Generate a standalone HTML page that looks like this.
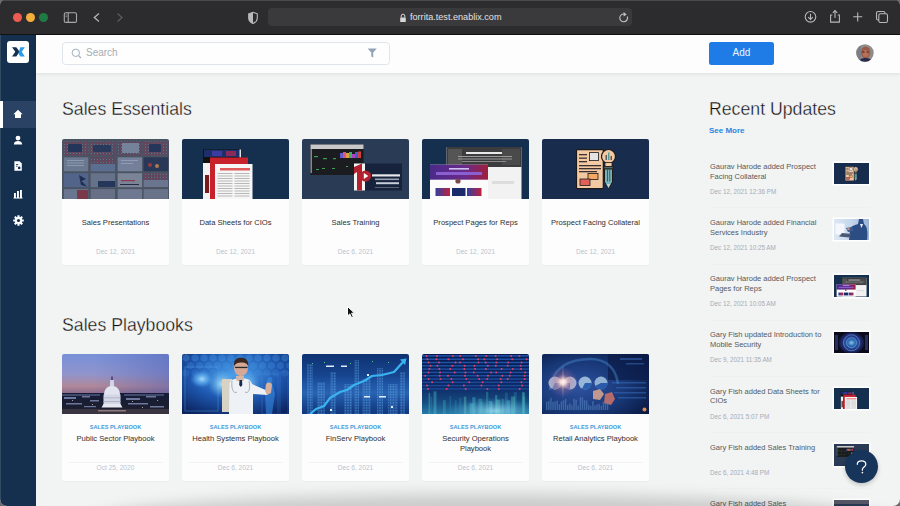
<!DOCTYPE html>
<html><head><meta charset="utf-8">
<style>
*{box-sizing:border-box;margin:0;padding:0}
html,body{width:900px;height:506px;overflow:hidden;background:#6a6a6c}
body{font-family:"Liberation Sans",sans-serif;position:relative}
.abs{position:absolute}
#win{position:absolute;left:0;top:0;width:900px;height:506px;border-radius:5px 5px 7px 7px;overflow:hidden;background:#f2f3f3}
#chrome{position:absolute;left:0;top:0;width:900px;height:35px;background:#2c2c2e;border-top:1px solid #4a4a4c;border-bottom:1px solid #111}
#side{position:absolute;left:0;top:35px;width:36px;height:471px;background:#15304f}
#hdr{position:absolute;left:36px;top:35px;width:864px;height:38px;background:#fdfdfd;box-shadow:0 1px 4px rgba(0,0,0,.09)}
.t{position:absolute;white-space:nowrap;line-height:1}
.card{position:absolute;width:107px;background:#fdfdfd;border-radius:2px;box-shadow:0 1px 1px rgba(0,0,0,.03);overflow:hidden}
.card .img{position:absolute;left:0;top:0;width:107px;height:60px;overflow:hidden}
.card .ti{position:absolute;left:0;width:107px;text-align:center;font-size:7.6px;color:#303030;line-height:10px;white-space:nowrap}
.card .dt{position:absolute;left:0;width:107px;text-align:center;font-size:6.6px;color:#b9c4cf;line-height:8px}
.card .lb{position:absolute;left:0;width:107px;text-align:center;font-size:5.6px;font-weight:bold;color:#3d9bd8;line-height:8px}
.card .dv{position:absolute;left:6px;width:95px;height:1px;background:#f1f3f5}
.h1{position:absolute;font-size:17.7px;color:#0a0a0a;line-height:1;white-space:nowrap;-webkit-text-stroke:.35px #f2f3f3}
.ru{position:absolute;left:710px;width:120px;font-size:7.5px;color:#555a60;line-height:9.8px}
.rd{position:absolute;left:710px;font-size:6.3px;color:#a3adb8;line-height:8px;white-space:nowrap}
.th{position:absolute;left:834px;width:35px;height:21.5px;overflow:hidden;background:#1b2f50;box-shadow:0 0 0 1.5px #fff}
.sep{position:absolute;left:710px;width:160px;height:1px;background:#eef0f1}
</style></head><body>
<div id="win">
 <div id="chrome">
  <div class="abs" style="left:12.5px;top:11.5px;width:9px;height:9px;border-radius:50%;background:#ee5b52"></div>
  <div class="abs" style="left:25.5px;top:11.5px;width:9px;height:9px;border-radius:50%;background:#f4ae3c"></div>
  <div class="abs" style="left:39px;top:11.5px;width:9px;height:9px;border-radius:50%;background:#1f7a45"></div>
  <svg class="abs" style="left:60px;top:7px" width="20" height="20" viewBox="0 0 20 20"><rect x="4.3" y="4.8" width="12.2" height="9.6" rx="1.5" fill="none" stroke="#a9a9ab" stroke-width="1.1"/><line x1="8.2" y1="4.8" x2="8.2" y2="14.4" stroke="#a9a9ab" stroke-width="1.1"/><line x1="5.6" y1="7" x2="6.9" y2="7" stroke="#a9a9ab" stroke-width=".8"/><line x1="5.6" y1="8.6" x2="6.9" y2="8.6" stroke="#a9a9ab" stroke-width=".8"/></svg>
  <svg class="abs" style="left:88px;top:7px" width="20" height="20" viewBox="0 0 20 20"><polyline points="11,5.5 6.3,9.5 11,13.5" fill="none" stroke="#b4b4b6" stroke-width="1.3"/></svg>
  <svg class="abs" style="left:111px;top:7px" width="20" height="20" viewBox="0 0 20 20"><polyline points="6.5,5.5 11,9.5 6.5,13.5" fill="none" stroke="#5c5c5e" stroke-width="1.2"/></svg>
  <svg class="abs" style="left:246px;top:9px" width="14" height="16" viewBox="0 0 14 16"><path d="M7 2.3 L11.3 3.8 L11.3 8 C11.3 10.8 9.3 12.6 7 13.6 C4.7 12.6 2.7 10.8 2.7 8 L2.7 3.8 Z" fill="none" stroke="#b9b9bb" stroke-width="1.1"/><path d="M7 2.3 L2.7 3.8 L2.7 8 C2.7 10.8 4.7 12.6 7 13.6 Z" fill="#b9b9bb"/></svg>
  <div class="abs" style="left:268px;top:7px;width:364px;height:18px;border-radius:4px;background:#3a393c"></div>
  <svg class="abs" style="left:399px;top:12px" width="8" height="10" viewBox="0 0 8 10"><path d="M2.2 4.5 V3 A1.8 1.8 0 0 1 5.8 3 V4.5" fill="none" stroke="#d8d8d8" stroke-width="1"/><rect x="1.2" y="4.5" width="5.6" height="4.6" rx=".6" fill="#d8d8d8"/></svg>
  <div class="t" style="left:410px;top:12px;font-size:9.1px;color:#e2e2e2">forrita.test.enablix.com</div>
  <svg class="abs" style="left:617px;top:9px" width="14" height="15" viewBox="0 0 14 15"><path d="M10.3 6.5 A3.9 3.9 0 1 1 7.9 4.2" fill="none" stroke="#c4c4c6" stroke-width="1.1"/><path d="M6.6 2 L9.6 4.4 L6.6 6.4 Z" fill="#c4c4c6"/></svg>
  <svg class="abs" style="left:803px;top:8.2px" width="16" height="16" viewBox="0 0 16 16"><circle cx="7.5" cy="7.8" r="5.3" fill="none" stroke="#b8b8ba" stroke-width="1.1"/><line x1="7.5" y1="4.8" x2="7.5" y2="10.3" stroke="#b8b8ba" stroke-width="1.1"/><polyline points="5.2,8.2 7.5,10.4 9.8,8.2" fill="none" stroke="#b8b8ba" stroke-width="1.1"/></svg>
  <svg class="abs" style="left:827px;top:7px" width="16" height="17" viewBox="0 0 16 17"><path d="M5.3 7 H3.6 V14.1 H12.4 V7 H10.7" fill="none" stroke="#b8b8ba" stroke-width="1.1"/><line x1="8" y1="2.6" x2="8" y2="10" stroke="#b8b8ba" stroke-width="1.1"/><polyline points="5.8,4.8 8,2.6 10.2,4.8" fill="none" stroke="#b8b8ba" stroke-width="1.1"/></svg>
  <svg class="abs" style="left:850px;top:8.2px" width="16" height="16" viewBox="0 0 16 16"><line x1="7.7" y1="3.4" x2="7.7" y2="12.4" stroke="#b8b8ba" stroke-width="1.1"/><line x1="3.2" y1="7.8" x2="12.2" y2="7.8" stroke="#b8b8ba" stroke-width="1.1"/></svg>
  <svg class="abs" style="left:873px;top:7px" width="18" height="17" viewBox="0 0 18 17"><rect x="3.5" y="3.5" width="8.5" height="8.5" rx="1.6" fill="none" stroke="#b8b8ba" stroke-width="1.1"/><rect x="5.8" y="5.8" width="8.7" height="8.7" rx="1.6" fill="#2c2c2e" stroke="#b8b8ba" stroke-width="1.1"/></svg>
 </div>
 <div id="side">
  <div class="abs" style="left:6.5px;top:5.5px;width:22.5px;height:22px;border-radius:3px;background:#fff"></div>
  <svg class="abs" style="left:6.5px;top:5.5px" width="23" height="22" viewBox="0 0 23 22"><path d="M5 6.3 H9.3 L12.6 10.8 L9.3 15.5 H5 L8.3 10.8 Z" fill="#15304f"/><path d="M13.3 6.3 H17.8 L14.8 10.8 L17.8 15.5 H13.3 L11.3 12.6 Z" fill="#2a9be8"/></svg>
  <div class="abs" style="left:0;top:65.5px;width:36px;height:27.5px;background:#2a4263"></div>
  <div class="abs" style="left:0;top:65.5px;width:2.8px;height:27.5px;background:#ffffff"></div>
  <svg class="abs" style="left:12px;top:73px" width="12" height="12" viewBox="0 0 12 12"><path d="M6 1.8 L10.6 6.2 H9 V10 H3 V6.2 H1.4 Z" fill="#fff"/></svg>
  <svg class="abs" style="left:12px;top:99px" width="12" height="12" viewBox="0 0 12 12"><circle cx="6" cy="4.1" r="2.4" fill="#fff"/><path d="M1.8 10.4 C2 7.8 3.8 7.1 6 7.1 C8.2 7.1 10 7.8 10.2 10.4 Z" fill="#fff"/></svg>
  <svg class="abs" style="left:12px;top:125px" width="12" height="12" viewBox="0 0 12 12"><path d="M2.4 1.3 H7.6 L9.8 3.5 V10.8 H2.4 Z" fill="#fff"/><path d="M4 4.5 H6.3 M4 6.2 H5.5" stroke="#15304f" stroke-width=".8"/><circle cx="7.2" cy="7.9" r="1.3" fill="#15304f"/></svg>
  <svg class="abs" style="left:12px;top:153px" width="12" height="12" viewBox="0 0 12 12"><rect x="2" y="5" width="1.9" height="5" fill="#fff"/><rect x="5" y="3" width="1.9" height="7" fill="#fff"/><rect x="8" y="2" width="1.9" height="8" fill="#fff"/><rect x="1.5" y="9.6" width="9" height=".9" fill="#fff"/></svg>
  <svg class="abs" style="left:11.5px;top:179px" width="13" height="13" viewBox="0 0 13 13"><g transform="translate(6.5 6.5)" fill="#fff"><circle r="3.6"/><rect x="-1.1" y="-5.3" width="2.2" height="10.6" rx=".4"/><rect x="-1.1" y="-5.3" width="2.2" height="10.6" rx=".4" transform="rotate(45)"/><rect x="-1.1" y="-5.3" width="2.2" height="10.6" rx=".4" transform="rotate(90)"/><rect x="-1.1" y="-5.3" width="2.2" height="10.6" rx=".4" transform="rotate(135)"/></g><circle cx="6.5" cy="6.5" r="1.6" fill="#15304f"/></svg>
 </div>
 <div id="hdr">
  <div class="abs" style="left:26px;top:7px;width:328px;height:23px;border:1px solid #dfe5eb;border-radius:3.5px;background:#fefefe"></div>
  <svg class="abs" style="left:34px;top:12px" width="14" height="14" viewBox="0 0 14 14"><circle cx="5.8" cy="5.8" r="3.7" fill="none" stroke="#9fb0c1" stroke-width="1"/><line x1="8.5" y1="8.5" x2="11" y2="11" stroke="#9fb0c1" stroke-width="1.1"/></svg>
  <div class="t" style="left:50px;top:13px;font-size:10px;color:#a5adb5">Search</div>
  <svg class="abs" style="left:330px;top:12px" width="12" height="12" viewBox="0 0 12 12"><path d="M1.7 1.6 H10.8 L7.2 5.6 V10.6 L5.3 9.4 V5.6 Z" fill="#90a3b6"/></svg>
  <div class="abs" style="left:673px;top:7px;width:65px;height:23px;border-radius:2.5px;background:#1f7ce6"></div>
  <div class="t" style="left:673px;top:13px;width:65px;text-align:center;font-size:10px;color:#eaf3fd">Add</div>
  <svg class="abs" style="left:819.5px;top:9px" width="18" height="18" viewBox="0 0 18 18"><defs><clipPath id="avc"><circle cx="9" cy="9" r="8.7"/></clipPath></defs><g clip-path="url(#avc)"><rect width="18" height="18" fill="#8f8c8a"/><rect x="0" y="0" width="5" height="18" fill="#7d7f86"/><ellipse cx="9.6" cy="8.6" rx="4.6" ry="6" fill="#9a5a48"/><ellipse cx="9.6" cy="9.5" rx="3" ry="3.5" fill="#b87058"/><rect x="6.5" y="7.5" width="2" height="1" fill="#3a1a1a"/><rect x="10.5" y="7.5" width="2" height="1" fill="#3a1a1a"/><path d="M3 18 C4 14.5 6.5 14 9.5 14 C12.5 14 15 14.5 16 18 Z" fill="#2a2a4a"/></g></svg>
 </div>
<!--MAIN-->
<div class="h1" style="left:62px;top:100.5px">Sales Essentials</div>
<div class="h1" style="left:62px;top:317px">Sales Playbooks</div>
<div class="h1" style="left:709px;top:101px">Recent Updates</div>
<div class="t" style="left:709px;top:127px;font-size:8px;font-weight:bold;color:#2b86df">See More</div>
<div class="card" style="left:62px;top:138.5px;height:126.5px"><div class="img"><svg width="107" height="60" viewBox="0 0 107 60" preserveAspectRatio="none" style="display:block"><defs><pattern id="rdp" width="3" height="3" patternUnits="userSpaceOnUse"><rect width="3" height="3" fill="#4e4a60"/><circle cx="1" cy="1" r=".7" fill="#9a3a50"/><circle cx="2.4" cy="2.3" r=".5" fill="#7a8aa8"/></pattern></defs><rect width="107" height="60" fill="#4a5362"/><rect x="1.8" y="2.4" width="24.5" height="14" fill="url(#rdp)"/><rect x="28.6" y="2.4" width="24.5" height="14" fill="url(#rdp)"/><rect x="55.6" y="2.4" width="24.5" height="14" fill="url(#rdp)"/><rect x="81.6" y="2.4" width="24.5" height="14" fill="url(#rdp)"/><rect x="1.8" y="18.3" width="24.5" height="14" fill="#6a7890"/><rect x="28.6" y="18.3" width="24.5" height="14" fill="url(#rdp)"/><rect x="55.6" y="18.3" width="24.5" height="14" fill="#74809a"/><rect x="81.6" y="18.3" width="24.5" height="14" fill="#2a3858"/><rect x="1.8" y="34.2" width="24.5" height="14" fill="#52648a"/><rect x="28.6" y="34.2" width="24.5" height="14" fill="#66728a"/><rect x="55.6" y="34.2" width="24.5" height="14" fill="#7a8496"/><rect x="81.6" y="34.2" width="24.5" height="14" fill="url(#rdp)"/><rect x="1.8" y="50.1" width="24.5" height="14" fill="#6a7690"/><rect x="28.6" y="50.1" width="24.5" height="14" fill="#687088"/><rect x="55.6" y="50.1" width="24.5" height="14" fill="#6e7890"/><rect x="81.6" y="50.1" width="24.5" height="14" fill="#687288"/>
<rect x="6" y="5" width="14" height="8" rx="1" fill="#24355a"/><rect x="31" y="6" width="18" height="7" rx="1" fill="#2a3a5c"/>
<rect x="60" y="4" width="17" height="10" fill="#74829a"/>
<rect x="87" y="5" width="12" height="8" rx="1" fill="#25365a"/>
<g fill="#a8b4c8" opacity=".55"><rect x="5" y="21" width="17" height="1"/><rect x="5" y="23.5" width="17" height="1"/><rect x="5" y="26" width="17" height="1"/><rect x="59" y="21" width="17" height="1"/><rect x="59" y="24" width="12" height="1"/></g>
<rect x="28.6" y="25" width="24.5" height="7.3" fill="#5a6e90"/>
<circle cx="88" cy="26" r="2" fill="#9a3a3a"/><circle cx="95" cy="27" r="2" fill="#b07a50"/>
<path d="M17 36 L24 40 L19.5 42 L25 47.5 L19 46 Z" fill="#1f2f52"/>
<rect x="36" y="42" width="17" height="6" fill="#24365a"/>
<rect x="59" y="41" width="14" height="1.2" fill="#8a3a4a"/><rect x="58" y="45" width="19" height="1" fill="#222a44"/>
<rect x="81.6" y="41" width="24.5" height="7" fill="#6a7590"/>
<rect x="15" y="51" width="11" height="10" fill="#7a3a4a"/>
</svg></div><div class="ti" style="top:79px">Sales Presentations</div><div class="dt" style="top:109.5px">Dec 12, 2021</div></div>
<div class="card" style="left:182px;top:138.5px;height:126.5px"><div class="img"><svg width="107" height="60" viewBox="0 0 107 60" preserveAspectRatio="none" style="display:block"><rect width="107" height="60" fill="#15304f"/>
<rect x="21" y="10.5" width="38" height="50" fill="#111"/>
<rect x="22" y="11" width="36" height="7" fill="#1d2f6a"/><rect x="30" y="12" width="10" height="5" fill="#3c3ca0"/><rect x="44" y="12" width="10" height="5" fill="#8a2a5a"/>
<rect x="57.5" y="10.5" width="1.5" height="8" fill="#ddd"/>
<rect x="21" y="24" width="7" height="36" fill="#f2f2f2"/><rect x="23" y="36" width="4" height="18" fill="#7a1a1a"/>
<rect x="28" y="18.5" width="38" height="42" fill="#c8212b"/>
<rect x="33" y="25" width="37.5" height="36" fill="#f6f6f6"/>
<rect x="38" y="29" width="30" height="2.5" fill="#e05a5a"/>
<g fill="#b8b8b8"><rect x="35.5" y="34" width="15" height="1"/><rect x="35.5" y="36.5" width="15" height="1"/><rect x="35.5" y="39" width="15" height="1"/><rect x="35.5" y="41.5" width="15" height="1"/><rect x="35.5" y="44" width="15" height="1"/><rect x="35.5" y="46.5" width="15" height="1"/><rect x="35.5" y="49" width="15" height="1"/><rect x="35.5" y="51.5" width="15" height="1"/><rect x="35.5" y="54" width="15" height="1"/><rect x="35.5" y="56.5" width="15" height="1"/>
<rect x="52.5" y="34" width="15" height="1"/><rect x="52.5" y="36.5" width="15" height="1"/><rect x="52.5" y="39" width="15" height="1"/><rect x="52.5" y="41.5" width="15" height="1"/><rect x="52.5" y="44" width="15" height="1"/><rect x="52.5" y="46.5" width="15" height="1"/><rect x="52.5" y="49" width="15" height="1"/><rect x="52.5" y="51.5" width="15" height="1"/><rect x="52.5" y="54" width="15" height="1"/><rect x="52.5" y="56.5" width="15" height="1"/></g>
</svg></div><div class="ti" style="top:79px">Data Sheets for CIOs</div><div class="dt" style="top:109.5px">Dec 12, 2021</div></div>
<div class="card" style="left:302px;top:138.5px;height:126.5px"><div class="img"><svg width="107" height="60" viewBox="0 0 107 60" preserveAspectRatio="none" style="display:block"><rect width="107" height="60" fill="#2a3b56"/>
<rect x="8.5" y="5.5" width="53" height="30.5" fill="#1b1c20"/>
<rect x="8.5" y="5.5" width="53" height="4.5" fill="#c8c8c8"/>
<rect x="8.5" y="10" width="1.5" height="24" fill="#888"/>
<g fill="#3aa050"><rect x="12" y="17" width="4" height="1.2"/><rect x="21" y="19" width="4" height="1.2"/><rect x="31" y="19" width="3" height="1.2"/><rect x="14" y="30" width="3" height="1"/><rect x="20" y="29" width="3" height="1"/><rect x="30" y="29" width="3" height="1"/><rect x="44" y="27" width="2" height="1"/></g>
<rect x="38" y="14" width="3" height="5" fill="#6a5ad0"/><rect x="41" y="13" width="3" height="6" fill="#d05a8a"/><rect x="44" y="14" width="3" height="5" fill="#e0a040"/><rect x="47" y="13" width="3" height="6" fill="#40b070"/><rect x="50" y="15" width="3" height="4" fill="#b040c0"/><rect x="53" y="13" width="3" height="6" fill="#4060d0"/><rect x="56" y="12.5" width="3" height="6.5" fill="#d04040"/>
<rect x="52" y="24.5" width="48" height="27" fill="#17233d"/>
<path d="M52 24.5 H63 V51.5 H52 Z" fill="#f4f4f4"/>
<path d="M52 28 L60 24.5 L60 51.5 L55 51.5 L55 33 L52 35 Z" fill="#b3202e"/>
<circle cx="63.5" cy="37" r="5.6" fill="#b3202e"/><path d="M61.8 34 L66.3 37 L61.8 40 Z" fill="#fff"/>
<rect x="70" y="35.3" width="28" height="2.2" fill="#e8e8e8"/>
<rect x="73" y="39.5" width="24" height="1.6" fill="#9aa0b0"/>
<rect x="74" y="43.2" width="23" height="2" fill="#c8ccd6"/>
<rect x="73" y="48" width="24" height=".8" fill="#6a7080"/>
</svg></div><div class="ti" style="top:79px">Sales Training</div><div class="dt" style="top:109.5px">Dec 6, 2021</div></div>
<div class="card" style="left:422px;top:138.5px;height:126.5px"><div class="img"><svg width="107" height="60" viewBox="0 0 107 60" preserveAspectRatio="none" style="display:block"><rect width="107" height="60" fill="#15304f"/>
<rect x="24.5" y="8" width="75" height="52" fill="#f2f2f2"/>
<rect x="24.5" y="8" width="75" height="20" fill="#3c3c3e"/>
<rect x="26" y="10" width="14" height="16" fill="#555"/><rect x="80" y="10" width="18" height="16" fill="#4a4a4a"/>
<rect x="44" y="13" width="36" height="2" fill="#e8e8e8"/>
<rect x="36" y="17" width="54" height="1" fill="#9a9a9a"/><rect x="36" y="19.5" width="54" height="1" fill="#9a9a9a"/><rect x="40" y="22" width="44" height="1" fill="#8a8a8a"/>
<rect x="70" y="42" width="22" height="3" fill="#ddd"/>
<rect x="8" y="25.7" width="58" height="35" fill="#fbfbfb"/>
<defs><linearGradient id="ppg" x1="0" x2="1"><stop offset="0" stop-color="#4a2a8a"/><stop offset=".6" stop-color="#6a2a8a"/><stop offset="1" stop-color="#a0203a"/></linearGradient>
<linearGradient id="ppt" x1="0" x2="1"><stop offset="0" stop-color="#3040a0"/><stop offset="1" stop-color="#c02040"/></linearGradient></defs>
<rect x="8" y="25.7" width="58" height="15" fill="url(#ppg)"/>
<rect x="27" y="29" width="20" height="1.6" fill="#d0c0f0"/>
<rect x="14" y="33" width="46" height="3" fill="#8a60d0"/>
<circle cx="36" cy="42" r="2.6" fill="#7a4a4a"/>
<rect x="13.5" y="49" width="14.5" height="8" fill="url(#ppt)"/><rect x="30" y="49" width="13.5" height="8" fill="#1a2a6a"/><rect x="45" y="49" width="14.5" height="8" fill="url(#ppt)"/>
</svg></div><div class="ti" style="top:79px">Prospect Pages for Reps</div><div class="dt" style="top:109.5px">Dec 12, 2021</div></div>
<div class="card" style="left:542px;top:138.5px;height:126.5px"><div class="img"><svg width="107" height="60" viewBox="0 0 107 60" preserveAspectRatio="none" style="display:block"><rect width="107" height="60" fill="#182d4e"/>
<rect x="34.5" y="10.6" width="26.8" height="39" rx="1" fill="#f2c9a3" stroke="#1a1a1a" stroke-width="1.2"/>
<g fill="#3a3030"><rect x="37" y="15" width="8" height="1.3"/><rect x="37" y="18.5" width="8" height="1.3"/><rect x="37" y="22" width="8" height="1.3"/><rect x="37" y="26" width="22" height="1.3"/><rect x="37" y="29" width="22" height="1.3"/><rect x="37" y="32" width="18" height="1.3"/></g>
<rect x="47.5" y="13.6" width="9" height="8" fill="#e4e4e4" stroke="#1a1a1a" stroke-width=".8"/>
<rect x="46" y="34.5" width="10" height="6" fill="#f4a860" stroke="#1a1a1a" stroke-width=".8"/>
<rect x="38" y="40" width="10" height="6.5" fill="#e0605a" stroke="#1a1a1a" stroke-width=".8"/>
<circle cx="66.5" cy="17.5" r="7" fill="#f2c9a3" stroke="#1a1a1a" stroke-width="1.2"/>
<rect x="63.5" y="16" width="1.5" height="5" fill="#5a5a5a"/><rect x="66" y="13.5" width="1.5" height="7.5" fill="#5a9a9a"/><rect x="68.5" y="17" width="1.5" height="4" fill="#5a5a5a"/>
<path d="M63 23.5 H70 V27.5 H63 Z" fill="#f2c9a3" stroke="#1a1a1a" stroke-width=".8"/>
<rect x="62" y="27.5" width="9" height="2.6" fill="#5a6a6a" stroke="#1a1a1a" stroke-width=".7"/>
<path d="M62.5 30 H70.5 V43 L66.5 49.5 L62.5 43 Z" fill="#7ab0b8" stroke="#1a1a1a" stroke-width="1"/>
<rect x="65" y="30.5" width=".8" height="12" fill="#2a4a50"/><rect x="67.4" y="30.5" width=".8" height="12" fill="#2a4a50"/>
<path d="M64.5 45 L66.5 49 L68.5 45 Z" fill="#ccc"/>
</svg></div><div class="ti" style="top:79px">Prospect Facing Collateral</div><div class="dt" style="top:109.5px">Dec 12, 2021</div></div>
<div class="card" style="left:62px;top:354px;height:127px"><div class="img"><svg width="107" height="60" viewBox="0 0 107 60" preserveAspectRatio="none" style="display:block"><defs><linearGradient id="sky" x1="0" y1="0" x2="0" y2="1"><stop offset="0" stop-color="#7890d8"/><stop offset=".5" stop-color="#9094cc"/><stop offset=".8" stop-color="#b0889a"/><stop offset="1" stop-color="#8a6a8a"/></linearGradient>
<linearGradient id="city" x1="0" y1="0" x2="0" y2="1"><stop offset="0" stop-color="#141c38"/><stop offset="1" stop-color="#20202c"/></linearGradient></defs>
<rect width="107" height="40" fill="url(#sky)"/>
<defs><linearGradient id="skr" x1="0" x2="1"><stop offset=".3" stop-color="#5064b0" stop-opacity="0"/><stop offset="1" stop-color="#4a5ab0" stop-opacity=".45"/></linearGradient></defs><rect x="0" y="0" width="107" height="40" fill="url(#skr)"/>
<rect y="39" width="107" height="21" fill="url(#city)"/>
<g fill="#8a96c0" opacity=".75"><rect x="2" y="43" width="12" height="2"/><rect x="20" y="42" width="8" height="1.5"/><rect x="64" y="44" width="14" height="2"/><rect x="84" y="42" width="10" height="1.5"/><rect x="4" y="49" width="16" height="1.5"/><rect x="66" y="49" width="20" height="1.5"/><rect x="88" y="52" width="14" height="1.5"/><rect x="28" y="46" width="9" height="1.5"/><rect x="62" y="40.5" width="40" height="1"/><rect x="0" y="40.5" width="38" height="1"/><rect x="22" y="52" width="12" height="1.2"/></g><g fill="#e8d8c0" opacity=".7"><rect x="10" y="46" width="1" height="1"/><rect x="30" y="50" width="1" height="1"/><rect x="70" y="47" width="1" height="1"/><rect x="95" y="46" width="1" height="1"/><rect x="80" y="53" width="1" height="1"/></g>
<rect x="49" y="22.5" width="2" height="4" fill="#5a4a80"/>
<path d="M47.8 33 L48.2 26 H51.8 L52.2 33 Z" fill="#d0d4e4"/>
<path d="M42 41 C42 35 45.5 32 50 32 C54.5 32 58 35 58 41 Z" fill="#e2e4f0"/>
<rect x="41.5" y="40.5" width="17" height="12" fill="#d4d8e6"/>
<path d="M39.5 53.5 L41.5 50 H58.5 L60.5 53.5 Z" fill="#e6e8f2"/>
<g fill="#a8acc4"><rect x="41.5" y="43.5" width="17" height=".8"/><rect x="41.5" y="47" width="17" height=".8"/></g>
<rect y="55" width="107" height="5" fill="#3a3440"/>
<g fill="#c8a8a0" opacity=".6"><rect x="36" y="56" width="28" height="1.5"/></g>
</svg></div><div class="lb" style="top:68.5px">SALES PLAYBOOK</div><div class="ti" style="top:80px">Public Sector Playbook</div><div class="dv" style="top:108px"></div><div class="dt" style="top:110px">Oct 25, 2020</div></div>
<div class="card" style="left:182px;top:354px;height:127px"><div class="img"><svg width="107" height="60" viewBox="0 0 107 60" preserveAspectRatio="none" style="display:block"><defs><radialGradient id="dg" cx=".5" cy=".35" r=".75"><stop offset="0" stop-color="#4aa0ec"/><stop offset=".55" stop-color="#1e58b0"/><stop offset="1" stop-color="#0c2460"/></radialGradient>
<radialGradient id="br" cx=".5" cy=".5" r=".5"><stop offset="0" stop-color="#a0dcff"/><stop offset=".6" stop-color="#50a0e8" stop-opacity=".7"/><stop offset="1" stop-color="#3a80d0" stop-opacity="0"/></radialGradient>
<radialGradient id="glw" cx=".5" cy=".5" r=".5"><stop offset="0" stop-color="#b8ecff" stop-opacity=".9"/><stop offset="1" stop-color="#60b8f0" stop-opacity="0"/></radialGradient></defs>
<rect width="107" height="60" fill="url(#dg)"/><polygon points="7.5,6.0 4.0,8.0 0.5,6.0 0.5,2.0 4.0,0.0 7.5,2.0" fill="#4a9ae8" opacity="0.35"/><polygon points="16.5,6.0 13.0,8.0 9.5,6.0 9.5,2.0 13.0,0.0 16.5,2.0" fill="#4a9ae8" opacity="0.35"/><polygon points="25.5,6.0 22.0,8.0 18.5,6.0 18.5,2.0 22.0,0.0 25.5,2.0" fill="#4a9ae8" opacity="0.35"/><polygon points="34.5,6.0 31.0,8.0 27.5,6.0 27.5,2.0 31.0,0.0 34.5,2.0" fill="#4a9ae8" opacity="0.35"/><polygon points="43.5,6.0 40.0,8.0 36.5,6.0 36.5,2.0 40.0,0.0 43.5,2.0" fill="#4a9ae8" opacity="0.35"/><polygon points="52.5,6.0 49.0,8.0 45.5,6.0 45.5,2.0 49.0,0.0 52.5,2.0" fill="#4a9ae8" opacity="0.35"/><polygon points="61.5,6.0 58.0,8.0 54.5,6.0 54.5,2.0 58.0,0.0 61.5,2.0" fill="#4a9ae8" opacity="0.35"/><polygon points="70.5,6.0 67.0,8.0 63.5,6.0 63.5,2.0 67.0,0.0 70.5,2.0" fill="#4a9ae8" opacity="0.35"/><polygon points="79.5,6.0 76.0,8.0 72.5,6.0 72.5,2.0 76.0,0.0 79.5,2.0" fill="#4a9ae8" opacity="0.35"/><polygon points="88.5,6.0 85.0,8.0 81.5,6.0 81.5,2.0 85.0,0.0 88.5,2.0" fill="#4a9ae8" opacity="0.35"/><polygon points="97.5,6.0 94.0,8.0 90.5,6.0 90.5,2.0 94.0,0.0 97.5,2.0" fill="#4a9ae8" opacity="0.35"/><polygon points="106.5,6.0 103.0,8.0 99.5,6.0 99.5,2.0 103.0,0.0 106.5,2.0" fill="#4a9ae8" opacity="0.35"/><polygon points="12.0,13.5 8.5,15.5 5.0,13.5 5.0,9.5 8.5,7.5 12.0,9.5" fill="#4a9ae8" opacity="0.27"/><polygon points="21.0,13.5 17.5,15.5 14.0,13.5 14.0,9.5 17.5,7.5 21.0,9.5" fill="#4a9ae8" opacity="0.27"/><polygon points="30.0,13.5 26.5,15.5 23.0,13.5 23.0,9.5 26.5,7.5 30.0,9.5" fill="#4a9ae8" opacity="0.27"/><polygon points="39.0,13.5 35.5,15.5 32.0,13.5 32.0,9.5 35.5,7.5 39.0,9.5" fill="#4a9ae8" opacity="0.27"/><polygon points="48.0,13.5 44.5,15.5 41.0,13.5 41.0,9.5 44.5,7.5 48.0,9.5" fill="#4a9ae8" opacity="0.27"/><polygon points="57.0,13.5 53.5,15.5 50.0,13.5 50.0,9.5 53.5,7.5 57.0,9.5" fill="#4a9ae8" opacity="0.27"/><polygon points="66.0,13.5 62.5,15.5 59.0,13.5 59.0,9.5 62.5,7.5 66.0,9.5" fill="#4a9ae8" opacity="0.27"/><polygon points="75.0,13.5 71.5,15.5 68.0,13.5 68.0,9.5 71.5,7.5 75.0,9.5" fill="#4a9ae8" opacity="0.27"/><polygon points="84.0,13.5 80.5,15.5 77.0,13.5 77.0,9.5 80.5,7.5 84.0,9.5" fill="#4a9ae8" opacity="0.27"/><polygon points="93.0,13.5 89.5,15.5 86.0,13.5 86.0,9.5 89.5,7.5 93.0,9.5" fill="#4a9ae8" opacity="0.27"/><polygon points="102.0,13.5 98.5,15.5 95.0,13.5 95.0,9.5 98.5,7.5 102.0,9.5" fill="#4a9ae8" opacity="0.27"/><polygon points="111.0,13.5 107.5,15.5 104.0,13.5 104.0,9.5 107.5,7.5 111.0,9.5" fill="#4a9ae8" opacity="0.27"/><polygon points="7.5,21.0 4.0,23.0 0.5,21.0 0.5,17.0 4.0,15.0 7.5,17.0" fill="#4a9ae8" opacity="0.19"/><polygon points="16.5,21.0 13.0,23.0 9.5,21.0 9.5,17.0 13.0,15.0 16.5,17.0" fill="#4a9ae8" opacity="0.19"/><polygon points="25.5,21.0 22.0,23.0 18.5,21.0 18.5,17.0 22.0,15.0 25.5,17.0" fill="#4a9ae8" opacity="0.19"/><polygon points="34.5,21.0 31.0,23.0 27.5,21.0 27.5,17.0 31.0,15.0 34.5,17.0" fill="#4a9ae8" opacity="0.19"/><polygon points="43.5,21.0 40.0,23.0 36.5,21.0 36.5,17.0 40.0,15.0 43.5,17.0" fill="#4a9ae8" opacity="0.19"/><polygon points="52.5,21.0 49.0,23.0 45.5,21.0 45.5,17.0 49.0,15.0 52.5,17.0" fill="#4a9ae8" opacity="0.19"/><polygon points="61.5,21.0 58.0,23.0 54.5,21.0 54.5,17.0 58.0,15.0 61.5,17.0" fill="#4a9ae8" opacity="0.19"/><polygon points="70.5,21.0 67.0,23.0 63.5,21.0 63.5,17.0 67.0,15.0 70.5,17.0" fill="#4a9ae8" opacity="0.19"/><polygon points="79.5,21.0 76.0,23.0 72.5,21.0 72.5,17.0 76.0,15.0 79.5,17.0" fill="#4a9ae8" opacity="0.19"/><polygon points="88.5,21.0 85.0,23.0 81.5,21.0 81.5,17.0 85.0,15.0 88.5,17.0" fill="#4a9ae8" opacity="0.19"/><polygon points="97.5,21.0 94.0,23.0 90.5,21.0 90.5,17.0 94.0,15.0 97.5,17.0" fill="#4a9ae8" opacity="0.19"/><polygon points="106.5,21.0 103.0,23.0 99.5,21.0 99.5,17.0 103.0,15.0 106.5,17.0" fill="#4a9ae8" opacity="0.19"/>
<rect x="3" y="13" width="33" height="44" fill="none" stroke="#5aa0e8" stroke-width=".7" opacity=".6"/>
<ellipse cx="20" cy="25" rx="12" ry="9" fill="url(#br)"/>
<ellipse cx="40" cy="30" rx="14" ry="14" fill="url(#glw)"/>
<ellipse cx="66" cy="30" rx="12" ry="14" fill="url(#glw)" opacity=".7"/>
<rect x="80" y="20" width="16" height="40" fill="none" stroke="#4a8ae0" stroke-width=".6" opacity=".6"/>
<rect x="98" y="18" width="8" height="42" fill="none" stroke="#4a8ae0" stroke-width=".6" opacity=".5"/>
<path d="M88 23 C90 23 91 26 90 29 L93 40 L90 60 H84 L83 40 L85 29 C84 26 86 23 88 23 Z" fill="#3a90e8" opacity=".55"/>
<path d="M40 25 H50 V58 H40 Z" fill="#d8d2c4"/>
<path d="M47 60 L47.5 30 C48 26 52 24.5 57 24.5 H63 C67 25 69 27 70 30 L86 37 L85 41 L71 40 L71 60 Z" fill="#eef2f6"/>
<path d="M84 30 C86 28 89 28 90 31 L89 39 L85 41 L83 37 Z" fill="#d8b0a0"/>
<path d="M54 22 H62 L61.5 27 H54.5 Z" fill="#d6b6a4"/>
<ellipse cx="59" cy="14" rx="7" ry="8.3" fill="#d4a894"/>
<path d="M52 12 C51.5 5.5 55 3.8 59 3.8 C63.5 3.8 66.5 6 66.3 12 C65 9 62 8.5 59 8.5 C56 8.5 53.5 9.5 52 12 Z" fill="#3a2820"/>
<rect x="53" y="12.8" width="12.5" height="1.3" fill="#2a2a2a"/>
<path d="M57.5 26 L60 26 L60.3 31 L58.8 33 L57.2 31 Z" fill="#1a2a4a"/>
<path d="M50 27 C49 36 52 40 55 38 M67 27 C69 36 66 40 63 38" fill="none" stroke="#8890a0" stroke-width=".7"/>
</svg></div><div class="lb" style="top:68.5px">SALES PLAYBOOK</div><div class="ti" style="top:80px">Health Systems Playbook</div><div class="dv" style="top:108px"></div><div class="dt" style="top:110px">Dec 6, 2021</div></div>
<div class="card" style="left:302px;top:354px;height:127px"><div class="img"><svg width="107" height="60" viewBox="0 0 107 60" preserveAspectRatio="none" style="display:block"><defs><linearGradient id="fg" x1="0" y1="0" x2="0" y2="1"><stop offset="0" stop-color="#0f3272"/><stop offset=".5" stop-color="#1a4c9a"/><stop offset="1" stop-color="#123a80"/></linearGradient></defs>
<rect width="107" height="60" fill="url(#fg)"/>
<defs><pattern id="fpx" width="1.6" height="1.6" patternUnits="userSpaceOnUse"><rect width="1" height="1" fill="#6ab0f0"/></pattern></defs><linearGradient id="fband" x1="0" y1="0" x2="0" y2="1"><stop offset="0" stop-color="#2a6ac0" stop-opacity="0"/><stop offset=".5" stop-color="#3a80d0" stop-opacity=".5"/><stop offset="1" stop-color="#2a6ac0" stop-opacity="0"/></linearGradient><rect x="0" y="22" width="107" height="34" fill="url(#fband)"/><g fill="url(#fpx)" opacity=".6"><rect x="5" y="10" width="6" height="50"/><rect x="15" y="28" width="8" height="32"/><rect x="28" y="18" width="6" height="42"/><rect x="42" y="30" width="8" height="30"/><rect x="52" y="6" width="5" height="54"/><rect x="60" y="25" width="9" height="35"/><rect x="75" y="14" width="6" height="46"/><rect x="86" y="30" width="10" height="30"/><rect x="98" y="18" width="5" height="42"/></g>
<g fill="#dfefff"><rect x="24" y="11.5" width="8" height="1.5"/><rect x="39" y="11.5" width="6" height="1.5"/><rect x="62" y="42" width="6" height="1.5"/><rect x="77" y="42" width="7" height="1.5"/><rect x="65" y="20" width="2" height="2"/><rect x="28" y="55" width="2" height="2"/><rect x="89" y="52" width="2" height="2"/></g>
<g fill="#4ad070"><rect x="10" y="9" width="1" height="1"/><rect x="22" y="8" width="1" height="1"/><rect x="48" y="9" width="1" height="1"/><rect x="70" y="7" width="1" height="1"/><rect x="86" y="8" width="1" height="1"/></g>
<polyline points="8,60 14,55 22,52 28,44 38,38 45,36 52,31 62,27 70,22 80,21 92,18 101,8" fill="none" stroke="#3ab4f0" stroke-width="2.2" stroke-linejoin="round"/>
<path d="M98 5.5 L104.5 4.5 L103 11 Z" fill="#3ab4f0"/>
</svg></div><div class="lb" style="top:68.5px">SALES PLAYBOOK</div><div class="ti" style="top:80px">FinServ Playbook</div><div class="dv" style="top:108px"></div><div class="dt" style="top:110px">Dec 6, 2021</div></div>
<div class="card" style="left:422px;top:354px;height:127px"><div class="img"><svg width="107" height="60" viewBox="0 0 107 60" preserveAspectRatio="none" style="display:block"><defs><linearGradient id="sg" x1="0" y1="0" x2="0" y2="1"><stop offset="0" stop-color="#081a50"/><stop offset=".55" stop-color="#0e2a66"/><stop offset=".8" stop-color="#164a80"/><stop offset="1" stop-color="#2a7aa8"/></linearGradient>
<radialGradient id="sgl" cx=".68" cy=".9" r=".45"><stop offset="0" stop-color="#b0f0ff" stop-opacity=".7"/><stop offset="1" stop-color="#40a0d0" stop-opacity="0"/></radialGradient></defs>
<rect width="107" height="60" fill="url(#sg)"/><rect x="0" y="1.2" width="107" height="1.4" fill="#2c74dc" opacity="0.70"/><circle cx="4.5" cy="1.9" r="1" fill="#e0406a"/><circle cx="15.0" cy="1.9" r="1" fill="#e0406a"/><circle cx="30.9" cy="1.9" r="1" fill="#e0406a"/><circle cx="38.2" cy="1.9" r="1" fill="#e0406a"/><circle cx="53.8" cy="1.9" r="1" fill="#e0406a"/><circle cx="64.3" cy="1.9" r="1" fill="#e0406a"/><circle cx="73.7" cy="1.9" r="1" fill="#e0406a"/><circle cx="89.2" cy="1.9" r="1" fill="#e0406a"/><circle cx="97.4" cy="1.9" r="1" fill="#e0406a"/><rect x="0" y="4.5" width="107" height="1.4" fill="#2c74dc" opacity="0.67"/><circle cx="5.4" cy="5.2" r="1" fill="#e0406a"/><circle cx="14.4" cy="5.2" r="1" fill="#e0406a"/><circle cx="26.4" cy="5.2" r="1" fill="#e0406a"/><circle cx="41.0" cy="5.2" r="1" fill="#e0406a"/><circle cx="56.1" cy="5.2" r="1" fill="#e0406a"/><circle cx="62.4" cy="5.2" r="1" fill="#e0406a"/><circle cx="75.1" cy="5.2" r="1" fill="#e0406a"/><circle cx="90.2" cy="5.2" r="1" fill="#e0406a"/><circle cx="104.6" cy="5.2" r="1" fill="#e0406a"/><rect x="0" y="7.8" width="107" height="1.4" fill="#2c74dc" opacity="0.64"/><circle cx="6.6" cy="8.5" r="1" fill="#e0406a"/><circle cx="17.0" cy="8.5" r="1" fill="#e0406a"/><circle cx="33.5" cy="8.5" r="1" fill="#e0406a"/><circle cx="38.0" cy="8.5" r="1" fill="#e0406a"/><circle cx="56.4" cy="8.5" r="1" fill="#e0406a"/><circle cx="63.7" cy="8.5" r="1" fill="#e0406a"/><circle cx="74.4" cy="8.5" r="1" fill="#e0406a"/><circle cx="86.1" cy="8.5" r="1" fill="#e0406a"/><circle cx="99.5" cy="8.5" r="1" fill="#e0406a"/><rect x="0" y="11.1" width="107" height="1.4" fill="#2c74dc" opacity="0.61"/><circle cx="8.5" cy="11.8" r="1" fill="#e0406a"/><circle cx="15.3" cy="11.8" r="1" fill="#e0406a"/><circle cx="30.4" cy="11.8" r="1" fill="#e0406a"/><circle cx="42.7" cy="11.8" r="1" fill="#e0406a"/><circle cx="52.5" cy="11.8" r="1" fill="#e0406a"/><circle cx="65.8" cy="11.8" r="1" fill="#e0406a"/><circle cx="73.8" cy="11.8" r="1" fill="#e0406a"/><circle cx="85.6" cy="11.8" r="1" fill="#e0406a"/><circle cx="98.7" cy="11.8" r="1" fill="#e0406a"/><rect x="0" y="14.4" width="107" height="1.4" fill="#2c74dc" opacity="0.58"/><circle cx="7.4" cy="15.1" r="1" fill="#e0406a"/><circle cx="17.3" cy="15.1" r="1" fill="#e0406a"/><circle cx="28.2" cy="15.1" r="1" fill="#e0406a"/><circle cx="42.3" cy="15.1" r="1" fill="#e0406a"/><circle cx="53.1" cy="15.1" r="1" fill="#e0406a"/><circle cx="63.8" cy="15.1" r="1" fill="#e0406a"/><circle cx="79.6" cy="15.1" r="1" fill="#e0406a"/><circle cx="90.8" cy="15.1" r="1" fill="#e0406a"/><circle cx="99.0" cy="15.1" r="1" fill="#e0406a"/><rect x="0" y="17.7" width="107" height="1.4" fill="#2c74dc" opacity="0.55"/><circle cx="6.5" cy="18.4" r="1" fill="#e0406a"/><circle cx="18.0" cy="18.4" r="1" fill="#e0406a"/><circle cx="32.7" cy="18.4" r="1" fill="#e0406a"/><circle cx="43.4" cy="18.4" r="1" fill="#e0406a"/><circle cx="51.8" cy="18.4" r="1" fill="#e0406a"/><circle cx="69.2" cy="18.4" r="1" fill="#e0406a"/><circle cx="74.2" cy="18.4" r="1" fill="#e0406a"/><circle cx="88.5" cy="18.4" r="1" fill="#e0406a"/><circle cx="103.1" cy="18.4" r="1" fill="#e0406a"/><rect x="0" y="21.0" width="107" height="1.4" fill="#2c74dc" opacity="0.52"/><circle cx="3.2" cy="21.7" r="1" fill="#e0406a"/><circle cx="17.7" cy="21.7" r="1" fill="#e0406a"/><circle cx="26.0" cy="21.7" r="1" fill="#e0406a"/><circle cx="43.0" cy="21.7" r="1" fill="#e0406a"/><circle cx="55.6" cy="21.7" r="1" fill="#e0406a"/><circle cx="66.0" cy="21.7" r="1" fill="#e0406a"/><circle cx="80.3" cy="21.7" r="1" fill="#e0406a"/><circle cx="87.7" cy="21.7" r="1" fill="#e0406a"/><circle cx="102.6" cy="21.7" r="1" fill="#e0406a"/><rect x="0" y="24.3" width="107" height="1.4" fill="#2c74dc" opacity="0.49"/><circle cx="6.7" cy="25.0" r="1" fill="#e0406a"/><circle cx="18.5" cy="25.0" r="1" fill="#e0406a"/><circle cx="29.4" cy="25.0" r="1" fill="#e0406a"/><circle cx="44.3" cy="25.0" r="1" fill="#e0406a"/><circle cx="57.1" cy="25.0" r="1" fill="#e0406a"/><circle cx="65.2" cy="25.0" r="1" fill="#e0406a"/><circle cx="78.6" cy="25.0" r="1" fill="#e0406a"/><circle cx="85.7" cy="25.0" r="1" fill="#e0406a"/><circle cx="102.7" cy="25.0" r="1" fill="#e0406a"/><rect x="0" y="27.6" width="107" height="1.4" fill="#2c74dc" opacity="0.46"/><circle cx="10.1" cy="28.3" r="1" fill="#e0406a"/><circle cx="30.7" cy="28.3" r="1" fill="#e0406a"/><circle cx="47.2" cy="28.3" r="1" fill="#e0406a"/><circle cx="60.7" cy="28.3" r="1" fill="#e0406a"/><circle cx="79.3" cy="28.3" r="1" fill="#e0406a"/><circle cx="99.4" cy="28.3" r="1" fill="#e0406a"/><rect x="0" y="30.9" width="107" height="1.4" fill="#2c74dc" opacity="0.43"/><circle cx="5.1" cy="31.6" r="1" fill="#e0406a"/><circle cx="26.4" cy="31.6" r="1" fill="#e0406a"/><circle cx="41.9" cy="31.6" r="1" fill="#e0406a"/><circle cx="59.4" cy="31.6" r="1" fill="#e0406a"/><circle cx="76.7" cy="31.6" r="1" fill="#e0406a"/><circle cx="100.2" cy="31.6" r="1" fill="#e0406a"/><rect x="0" y="34.2" width="107" height="1.4" fill="#2c74dc" opacity="0.40"/><circle cx="6.0" cy="34.9" r="1" fill="#e0406a"/><circle cx="24.7" cy="34.9" r="1" fill="#e0406a"/><circle cx="43.7" cy="34.9" r="1" fill="#e0406a"/><circle cx="65.4" cy="34.9" r="1" fill="#e0406a"/><circle cx="76.9" cy="34.9" r="1" fill="#e0406a"/><circle cx="97.7" cy="34.9" r="1" fill="#e0406a"/><rect x="57.7" y="47.5" width="3.7" height="12.5" fill="#2a8ab0" opacity=".38"/><rect x="74.2" y="45.6" width="4.0" height="14.4" fill="#60d0c0" opacity=".38"/><rect x="100.6" y="38.5" width="1.9" height="21.5" fill="#50c8d0" opacity=".38"/><rect x="69.1" y="47.6" width="1.5" height="12.4" fill="#50c8d0" opacity=".38"/><rect x="27.6" y="41.9" width="1.5" height="18.1" fill="#2a8ab0" opacity=".38"/><rect x="64.0" y="37.8" width="2.3" height="22.2" fill="#3ab0b0" opacity=".38"/><rect x="47.9" y="49.3" width="3.7" height="10.7" fill="#60d0c0" opacity=".38"/><rect x="41.8" y="42.7" width="2.5" height="17.3" fill="#60d0c0" opacity=".38"/><rect x="6.5" y="38.9" width="1.7" height="21.1" fill="#50c8d0" opacity=".38"/><rect x="11.5" y="37.4" width="3.0" height="22.6" fill="#50c8d0" opacity=".38"/><rect x="56.3" y="44.6" width="3.9" height="15.4" fill="#3ab0b0" opacity=".38"/><rect x="91.8" y="38.1" width="3.0" height="21.9" fill="#2a8ab0" opacity=".38"/><rect x="100.3" y="42.6" width="3.0" height="17.4" fill="#3ab0b0" opacity=".38"/><rect x="89.1" y="42.5" width="4.0" height="17.5" fill="#60d0c0" opacity=".38"/><rect x="32.7" y="46.5" width="1.9" height="13.5" fill="#2a8ab0" opacity=".38"/><rect x="50.3" y="43.2" width="3.2" height="16.8" fill="#50c8d0" opacity=".38"/><rect x="99.9" y="38.1" width="2.8" height="21.9" fill="#3ab0b0" opacity=".38"/><rect x="79.6" y="45.0" width="2.2" height="15.0" fill="#3ab0b0" opacity=".38"/><rect x="73.1" y="41.1" width="2.2" height="18.9" fill="#50c8d0" opacity=".38"/><rect x="37.3" y="43.6" width="2.1" height="16.4" fill="#2a8ab0" opacity=".38"/><rect x="66.8" y="47.0" width="3.0" height="13.0" fill="#50c8d0" opacity=".38"/><rect x="84.6" y="46.4" width="3.5" height="13.6" fill="#50c8d0" opacity=".38"/><rect x="21.0" y="46.2" width="2.7" height="13.8" fill="#3ab0b0" opacity=".38"/><rect x="83.0" y="38.7" width="2.7" height="21.3" fill="#2a8ab0" opacity=".38"/><rect x="47.0" y="49.8" width="3.8" height="10.2" fill="#2a8ab0" opacity=".38"/><rect x="8.5" y="42.6" width="1.8" height="17.4" fill="#2a8ab0" opacity=".38"/>
<rect x="0" y="30" width="107" height="30" fill="url(#sgl)"/>
</svg></div><div class="lb" style="top:68.5px">SALES PLAYBOOK</div><div class="ti" style="top:80px">Security Operations<br>Playbook</div><div class="dv" style="top:108px"></div><div class="dt" style="top:110px">Dec 6, 2021</div></div>
<div class="card" style="left:542px;top:354px;height:127px"><div class="img"><svg width="107" height="60" viewBox="0 0 107 60" preserveAspectRatio="none" style="display:block"><defs><radialGradient id="rg" cx=".35" cy=".55" r=".75"><stop offset="0" stop-color="#2e52a0"/><stop offset=".6" stop-color="#173674"/><stop offset="1" stop-color="#0a1a44"/></radialGradient>
<radialGradient id="flare" cx=".5" cy=".5" r=".5"><stop offset="0" stop-color="#ffffff"/><stop offset=".18" stop-color="#ffe0d8" stop-opacity=".9"/><stop offset=".5" stop-color="#c07898" stop-opacity=".35"/><stop offset="1" stop-color="#a060a0" stop-opacity="0"/></radialGradient></defs>
<rect width="107" height="60" fill="url(#rg)"/>
<rect x="66" y="0" width="41" height="26" fill="#0c1c48" opacity=".7"/>
<g fill="#3a70c0" opacity=".5"><rect x="78" y="4" width="22" height="2"/><rect x="84" y="9" width="18" height="1.5"/><rect x="70" y="28" width="34" height="1.5"/><rect x="74" y="33" width="30" height="1.5"/><rect x="72" y="38" width="32" height="1.5"/><rect x="76" y="43" width="28" height="1.5"/></g>
<path d="M8 36 C10 12 30 5 48 5 C66 5 74 16 76 30" fill="none" stroke="#4a8ad0" stroke-width="2.5" opacity=".45"/>
<circle cx="13" cy="29" r="6.5" fill="#a8b4cc"/><path d="M13 29 L19.5 29 A6.5 6.5 0 0 1 10 34.8 Z" fill="#6a80b0"/>
<circle cx="28" cy="29" r="6.5" fill="#a8b8d4"/><path d="M28 29 L28 35.5 A6.5 6.5 0 0 1 21.5 29 Z" fill="#5a78b0"/>
<circle cx="43" cy="29" r="6.5" fill="#98b6d8"/><path d="M43 29 L49.5 29 A6.5 6.5 0 0 1 40 34.8 Z" fill="#2a60b0"/>
<circle cx="59" cy="29" r="6.5" fill="#90b0d4"/><path d="M59 29 L65.5 29 A6.5 6.5 0 0 1 53 32 Z" fill="#2a5aa8"/>
<path d="M51 37 L58 35 L62 40 L58 46 L51 45 Z" fill="#c09890"/>
<path d="M63 40 L70 38 L73 45 L69 51 L62 49 Z" fill="#b86a6a"/><rect x="4.0" y="47.9" width="1.4" height="8.1" fill="#5a8ac8" opacity=".55"/><rect x="6.1" y="47.0" width="1.4" height="9.0" fill="#5a8ac8" opacity=".55"/><rect x="8.2" y="43.7" width="1.4" height="12.3" fill="#5a8ac8" opacity=".55"/><rect x="10.3" y="47.8" width="1.4" height="8.2" fill="#5a8ac8" opacity=".55"/><rect x="12.4" y="47.4" width="1.4" height="8.6" fill="#5a8ac8" opacity=".55"/><rect x="14.5" y="46.7" width="1.4" height="9.3" fill="#5a8ac8" opacity=".55"/><rect x="16.6" y="50.3" width="1.4" height="5.7" fill="#5a8ac8" opacity=".55"/><rect x="18.7" y="47.4" width="1.4" height="8.6" fill="#5a8ac8" opacity=".55"/><rect x="20.8" y="46.3" width="1.4" height="9.7" fill="#5a8ac8" opacity=".55"/><rect x="22.9" y="44.9" width="1.4" height="11.1" fill="#5a8ac8" opacity=".55"/><rect x="25.0" y="51.2" width="1.4" height="4.8" fill="#5a8ac8" opacity=".55"/><rect x="27.1" y="49.3" width="1.4" height="6.7" fill="#5a8ac8" opacity=".55"/><rect x="29.2" y="51.2" width="1.4" height="4.8" fill="#5a8ac8" opacity=".55"/><rect x="31.3" y="44.7" width="1.4" height="11.3" fill="#5a8ac8" opacity=".55"/><rect x="33.4" y="45.8" width="1.4" height="10.2" fill="#5a8ac8" opacity=".55"/><rect x="35.5" y="51.6" width="1.4" height="4.4" fill="#5a8ac8" opacity=".55"/><rect x="37.6" y="43.2" width="1.4" height="12.8" fill="#5a8ac8" opacity=".55"/><rect x="39.7" y="43.3" width="1.4" height="12.7" fill="#5a8ac8" opacity=".55"/><rect x="41.8" y="46.1" width="1.4" height="9.9" fill="#5a8ac8" opacity=".55"/><rect x="43.9" y="46.5" width="1.4" height="9.5" fill="#5a8ac8" opacity=".55"/><rect x="46.0" y="50.6" width="1.4" height="5.4" fill="#5a8ac8" opacity=".55"/><rect x="48.1" y="51.9" width="1.4" height="4.1" fill="#5a8ac8" opacity=".55"/><rect x="50.2" y="47.2" width="1.4" height="8.8" fill="#5a8ac8" opacity=".55"/><rect x="52.3" y="51.5" width="1.4" height="4.5" fill="#5a8ac8" opacity=".55"/><rect x="54.4" y="50.3" width="1.4" height="5.7" fill="#5a8ac8" opacity=".55"/><rect x="56.5" y="49.8" width="1.4" height="6.2" fill="#5a8ac8" opacity=".55"/><rect x="58.6" y="51.7" width="1.4" height="4.3" fill="#5a8ac8" opacity=".55"/><rect x="60.7" y="47.8" width="1.4" height="8.2" fill="#5a8ac8" opacity=".55"/><rect x="62.8" y="48.0" width="1.4" height="8.0" fill="#5a8ac8" opacity=".55"/><rect x="64.9" y="44.4" width="1.4" height="11.6" fill="#5a8ac8" opacity=".55"/>
<circle cx="21" cy="28" r="15" fill="url(#flare)"/>
<path d="M21 10 L21.6 28 L21 46 L20.4 28 Z" fill="#ffe8e0" opacity=".5"/>
<circle cx="102.5" cy="55.5" r="2" fill="#e08a50"/>
</svg></div><div class="lb" style="top:68.5px">SALES PLAYBOOK</div><div class="ti" style="top:80px">Retail Analytics Playbook</div><div class="dv" style="top:108px"></div><div class="dt" style="top:110px">Dec 6, 2021</div></div>
<div class="ru" style="top:161.8px">Gaurav Harode added Prospect<br>Facing Collateral</div>
<div class="rd" style="top:187.8px">Dec 12, 2021 12:36 PM</div>
<div class="th" style="top:162.6px"><svg width="35" height="21.5" viewBox="0 0 107 60" preserveAspectRatio="none" style="display:block"><rect width="107" height="60" fill="#182d4e"/>
<rect x="34.5" y="10.6" width="26.8" height="39" rx="1" fill="#f2c9a3" stroke="#1a1a1a" stroke-width="1.2"/>
<g fill="#3a3030"><rect x="37" y="15" width="8" height="1.3"/><rect x="37" y="18.5" width="8" height="1.3"/><rect x="37" y="22" width="8" height="1.3"/><rect x="37" y="26" width="22" height="1.3"/><rect x="37" y="29" width="22" height="1.3"/><rect x="37" y="32" width="18" height="1.3"/></g>
<rect x="47.5" y="13.6" width="9" height="8" fill="#e4e4e4" stroke="#1a1a1a" stroke-width=".8"/>
<rect x="46" y="34.5" width="10" height="6" fill="#f4a860" stroke="#1a1a1a" stroke-width=".8"/>
<rect x="38" y="40" width="10" height="6.5" fill="#e0605a" stroke="#1a1a1a" stroke-width=".8"/>
<circle cx="66.5" cy="17.5" r="7" fill="#f2c9a3" stroke="#1a1a1a" stroke-width="1.2"/>
<rect x="63.5" y="16" width="1.5" height="5" fill="#5a5a5a"/><rect x="66" y="13.5" width="1.5" height="7.5" fill="#5a9a9a"/><rect x="68.5" y="17" width="1.5" height="4" fill="#5a5a5a"/>
<path d="M63 23.5 H70 V27.5 H63 Z" fill="#f2c9a3" stroke="#1a1a1a" stroke-width=".8"/>
<rect x="62" y="27.5" width="9" height="2.6" fill="#5a6a6a" stroke="#1a1a1a" stroke-width=".7"/>
<path d="M62.5 30 H70.5 V43 L66.5 49.5 L62.5 43 Z" fill="#7ab0b8" stroke="#1a1a1a" stroke-width="1"/>
<rect x="65" y="30.5" width=".8" height="12" fill="#2a4a50"/><rect x="67.4" y="30.5" width=".8" height="12" fill="#2a4a50"/>
<path d="M64.5 45 L66.5 49 L68.5 45 Z" fill="#ccc"/>
</svg></div>
<div class="sep" style="top:207.4px"></div>
<div class="ru" style="top:218.0px">Gaurav Harode added Financial<br>Services Industry</div>
<div class="rd" style="top:244.0px">Dec 12, 2021 10:25 AM</div>
<div class="th" style="top:218.9px"><svg width="35" height="21.5" viewBox="0 0 35 21.5" preserveAspectRatio="none" style="display:block"><defs><linearGradient id="bz" x1="0" x2="1"><stop offset="0" stop-color="#dce8f4"/><stop offset=".5" stop-color="#c4d6ec"/><stop offset="1" stop-color="#9ab4d4"/></linearGradient></defs>
<rect width="35" height="21.5" fill="url(#bz)"/><rect x="1.5" y="4.5" width="9" height="11" fill="#f4f8fc"/>
<path d="M15 21.5 L16 10 C17 7 21 6 24 5 L25 0 H29 L30 5 C33 7 34 12 33 21.5 Z" fill="#2c4c84"/>
<path d="M26 5 L27.5 9 L29 5 Z" fill="#e8eef4"/>
<path d="M5 17.5 L15 18.5 L17.5 15 L8 14 Z" fill="#4a5a74"/>
<path d="M12 9 L18 8 L20 12 L14 13 Z" fill="#3a5a90"/>
<circle cx="14.5" cy="10" r="1.3" fill="#c09080"/></svg></div>
<div class="sep" style="top:263.6px"></div>
<div class="ru" style="top:274.2px">Gaurav Harode added Prospect<br>Pages for Reps</div>
<div class="rd" style="top:300.2px">Dec 12, 2021 10:05 AM</div>
<div class="th" style="top:275.2px"><svg width="35" height="21.5" viewBox="0 0 107 60" preserveAspectRatio="none" style="display:block"><rect width="107" height="60" fill="#15304f"/>
<rect x="24.5" y="8" width="75" height="52" fill="#f2f2f2"/>
<rect x="24.5" y="8" width="75" height="20" fill="#3c3c3e"/>
<rect x="26" y="10" width="14" height="16" fill="#555"/><rect x="80" y="10" width="18" height="16" fill="#4a4a4a"/>
<rect x="44" y="13" width="36" height="2" fill="#e8e8e8"/>
<rect x="36" y="17" width="54" height="1" fill="#9a9a9a"/><rect x="36" y="19.5" width="54" height="1" fill="#9a9a9a"/><rect x="40" y="22" width="44" height="1" fill="#8a8a8a"/>
<rect x="70" y="42" width="22" height="3" fill="#ddd"/>
<rect x="8" y="25.7" width="58" height="35" fill="#fbfbfb"/>
<defs><linearGradient id="ppg" x1="0" x2="1"><stop offset="0" stop-color="#4a2a8a"/><stop offset=".6" stop-color="#6a2a8a"/><stop offset="1" stop-color="#a0203a"/></linearGradient>
<linearGradient id="ppt" x1="0" x2="1"><stop offset="0" stop-color="#3040a0"/><stop offset="1" stop-color="#c02040"/></linearGradient></defs>
<rect x="8" y="25.7" width="58" height="15" fill="url(#ppg)"/>
<rect x="27" y="29" width="20" height="1.6" fill="#d0c0f0"/>
<rect x="14" y="33" width="46" height="3" fill="#8a60d0"/>
<circle cx="36" cy="42" r="2.6" fill="#7a4a4a"/>
<rect x="13.5" y="49" width="14.5" height="8" fill="url(#ppt)"/><rect x="30" y="49" width="13.5" height="8" fill="#1a2a6a"/><rect x="45" y="49" width="14.5" height="8" fill="url(#ppt)"/>
</svg></div>
<div class="sep" style="top:319.8px"></div>
<div class="ru" style="top:330.4px">Gary Fish updated Introduction to<br>Mobile Security</div>
<div class="rd" style="top:356.4px">Dec 9, 2021 11:35 AM</div>
<div class="th" style="top:331.5px"><svg width="35" height="21.5" viewBox="0 0 35 21.5" preserveAspectRatio="none" style="display:block"><defs><radialGradient id="mb" cx=".5" cy=".5" r=".55"><stop offset="0" stop-color="#b0e0ff"/><stop offset=".25" stop-color="#3080d0"/><stop offset=".6" stop-color="#2a3a90"/><stop offset="1" stop-color="#0a0a20"/></radialGradient></defs>
<rect width="35" height="21.5" fill="#0a0a1a"/><ellipse cx="17.5" cy="10.75" rx="13" ry="11" fill="url(#mb)" opacity=".85"/><g fill="#3a4a8a" opacity=".6"><rect x="1" y="3" width="3" height="15"/><rect x="31" y="3" width="3" height="15"/></g>
<circle cx="17.5" cy="10.75" r="8" fill="none" stroke="#70b0f0" stroke-width=".8" opacity=".7"/><circle cx="17.5" cy="10.75" r="5" fill="none" stroke="#80c0ff" stroke-width=".7" opacity=".7"/></svg></div>
<div class="sep" style="top:376.0px"></div>
<div class="ru" style="top:386.6px">Gary Fish added Data Sheets for<br>CIOs</div>
<div class="rd" style="top:412.6px">Dec 6, 2021 5:07 PM</div>
<div class="th" style="top:387.8px"><svg width="35" height="21.5" viewBox="0 0 107 60" preserveAspectRatio="none" style="display:block"><rect width="107" height="60" fill="#15304f"/>
<rect x="21" y="10.5" width="38" height="50" fill="#111"/>
<rect x="22" y="11" width="36" height="7" fill="#1d2f6a"/><rect x="30" y="12" width="10" height="5" fill="#3c3ca0"/><rect x="44" y="12" width="10" height="5" fill="#8a2a5a"/>
<rect x="57.5" y="10.5" width="1.5" height="8" fill="#ddd"/>
<rect x="21" y="24" width="7" height="36" fill="#f2f2f2"/><rect x="23" y="36" width="4" height="18" fill="#7a1a1a"/>
<rect x="28" y="18.5" width="38" height="42" fill="#c8212b"/>
<rect x="33" y="25" width="37.5" height="36" fill="#f6f6f6"/>
<rect x="38" y="29" width="30" height="2.5" fill="#e05a5a"/>
<g fill="#b8b8b8"><rect x="35.5" y="34" width="15" height="1"/><rect x="35.5" y="36.5" width="15" height="1"/><rect x="35.5" y="39" width="15" height="1"/><rect x="35.5" y="41.5" width="15" height="1"/><rect x="35.5" y="44" width="15" height="1"/><rect x="35.5" y="46.5" width="15" height="1"/><rect x="35.5" y="49" width="15" height="1"/><rect x="35.5" y="51.5" width="15" height="1"/><rect x="35.5" y="54" width="15" height="1"/><rect x="35.5" y="56.5" width="15" height="1"/>
<rect x="52.5" y="34" width="15" height="1"/><rect x="52.5" y="36.5" width="15" height="1"/><rect x="52.5" y="39" width="15" height="1"/><rect x="52.5" y="41.5" width="15" height="1"/><rect x="52.5" y="44" width="15" height="1"/><rect x="52.5" y="46.5" width="15" height="1"/><rect x="52.5" y="49" width="15" height="1"/><rect x="52.5" y="51.5" width="15" height="1"/><rect x="52.5" y="54" width="15" height="1"/><rect x="52.5" y="56.5" width="15" height="1"/></g>
</svg></div>
<div class="sep" style="top:432.2px"></div>
<div class="ru" style="top:442.8px">Gary Fish added Sales Training</div>
<div class="rd" style="top:468.8px">Dec 6, 2021 4:48 PM</div>
<div class="th" style="top:444.1px"><svg width="35" height="21.5" viewBox="0 0 107 60" preserveAspectRatio="none" style="display:block"><rect width="107" height="60" fill="#2a3b56"/>
<rect x="8.5" y="5.5" width="53" height="30.5" fill="#1b1c20"/>
<rect x="8.5" y="5.5" width="53" height="4.5" fill="#c8c8c8"/>
<rect x="8.5" y="10" width="1.5" height="24" fill="#888"/>
<g fill="#3aa050"><rect x="12" y="17" width="4" height="1.2"/><rect x="21" y="19" width="4" height="1.2"/><rect x="31" y="19" width="3" height="1.2"/><rect x="14" y="30" width="3" height="1"/><rect x="20" y="29" width="3" height="1"/><rect x="30" y="29" width="3" height="1"/><rect x="44" y="27" width="2" height="1"/></g>
<rect x="38" y="14" width="3" height="5" fill="#6a5ad0"/><rect x="41" y="13" width="3" height="6" fill="#d05a8a"/><rect x="44" y="14" width="3" height="5" fill="#e0a040"/><rect x="47" y="13" width="3" height="6" fill="#40b070"/><rect x="50" y="15" width="3" height="4" fill="#b040c0"/><rect x="53" y="13" width="3" height="6" fill="#4060d0"/><rect x="56" y="12.5" width="3" height="6.5" fill="#d04040"/>
<rect x="52" y="24.5" width="48" height="27" fill="#17233d"/>
<path d="M52 24.5 H63 V51.5 H52 Z" fill="#f4f4f4"/>
<path d="M52 28 L60 24.5 L60 51.5 L55 51.5 L55 33 L52 35 Z" fill="#b3202e"/>
<circle cx="63.5" cy="37" r="5.6" fill="#b3202e"/><path d="M61.8 34 L66.3 37 L61.8 40 Z" fill="#fff"/>
<rect x="70" y="35.3" width="28" height="2.2" fill="#e8e8e8"/>
<rect x="73" y="39.5" width="24" height="1.6" fill="#9aa0b0"/>
<rect x="74" y="43.2" width="23" height="2" fill="#c8ccd6"/>
<rect x="73" y="48" width="24" height=".8" fill="#6a7080"/>
</svg></div>
<div class="sep" style="top:488.4px"></div>
<div class="ru" style="top:499.0px">Gary Fish added Sales</div>
<div class="th" style="top:500.4px"><svg width="35" height="21.5" viewBox="0 0 35 21.5" preserveAspectRatio="none" style="display:block"><rect width="35" height="21.5" fill="#2a3b56"/><rect x="0" y="0" width="35" height="4" fill="#555a66"/></svg></div>
<div class="abs" style="left:844.5px;top:450px;width:33px;height:33px;border-radius:50%;background:#17345a;box-shadow:0 2px 4px rgba(0,0,0,.2)"></div>
<svg class="abs" style="left:844.5px;top:450px" width="33" height="33" viewBox="844.5 450 33 33"><path d="M856.8 464.3 C856.8 461.9 858.7 460.9 861 460.9 C863.5 460.9 865.3 462.3 865.3 464.4 C865.3 466.6 861.9 467.2 861.9 469.3 V470.2" fill="none" stroke="#fff" stroke-width="1.25" stroke-linecap="round"/><circle cx="861.9" cy="472.6" r=".85" fill="#fff"/></svg>
<!--/MAIN-->
<div class="abs" style="left:0;top:35px;width:1px;height:471px;background:rgba(255,255,255,.13)"></div>
<div class="abs" style="left:95px;top:494px;width:790px;height:50px;border-radius:50%;background:rgba(0,0,0,.16);filter:blur(7px)"></div>
<svg class="abs" style="left:344.5px;top:305px" width="12" height="14" viewBox="0 0 12 14"><path d="M2.5 1.5 L2.5 11 L4.8 8.9 L6.6 12.6 L8.3 11.8 L6.6 8.2 L9.6 8.2 Z" fill="#111" stroke="#fff" stroke-width="1" stroke-linejoin="round"/></svg>

</div>
</body></html>
